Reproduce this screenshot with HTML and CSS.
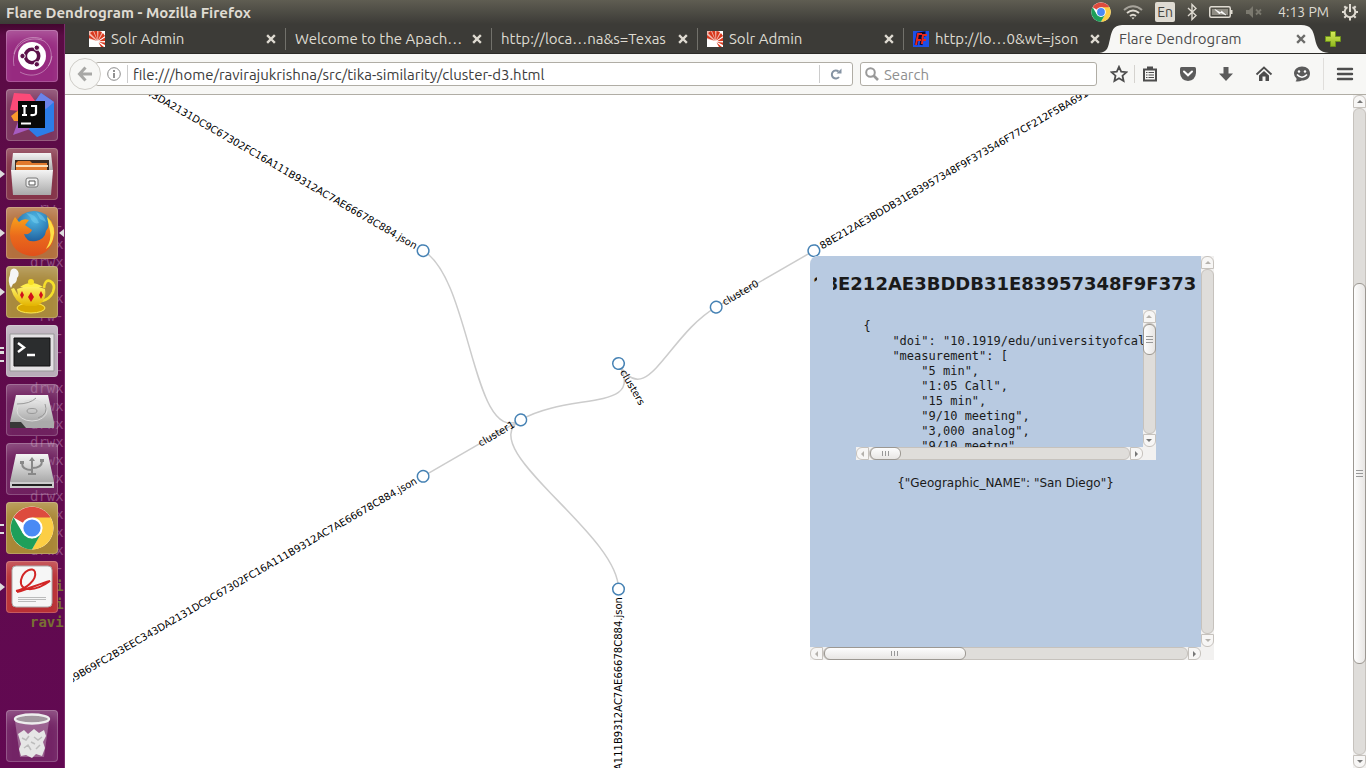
FILE: index.html
```html
<!DOCTYPE html>
<html lang="en">
<head>
<meta charset="utf-8">
<title>Flare Dendrogram</title>
<link rel="stylesheet" href="styles.css">
</head>
<body>
<svg class="defs" width="0" height="0" aria-hidden="true">
  <defs>
    <linearGradient id="g-metal" x1="0" y1="0" x2="0" y2="1"><stop offset="0" stop-color="#f4f4f4"/><stop offset="1" stop-color="#a9a9a9"/></linearGradient>
    <linearGradient id="g-fox" x1="0" y1="0" x2="0" y2="1"><stop offset="0" stop-color="#f9a51a"/><stop offset=".5" stop-color="#ea6a1c"/><stop offset="1" stop-color="#e0501b"/></linearGradient>
    <radialGradient id="g-globe" cx=".5" cy=".2" r=".8"><stop offset="0" stop-color="#4fb9e6"/><stop offset="1" stop-color="#0d3c80"/></radialGradient>
    <linearGradient id="g-pot" x1="0" y1="0" x2="0" y2="1"><stop offset="0" stop-color="#fff36b"/><stop offset="1" stop-color="#e3b400"/></linearGradient>
    <linearGradient id="g-plus" x1="0" y1="0" x2="0" y2="1"><stop offset="0" stop-color="#d8ec5a"/><stop offset="1" stop-color="#8fb81e"/></linearGradient>
    <symbol id="chrome" viewBox="0 0 44 44">
      <circle cx="22" cy="22" r="21.500" fill="#fff"/>
      <path d="M22 22 3.600 11.400A21.500 21.500 0 0 1 40.600 11.400Z" fill="#dd4b3e"/>
      <path d="M22 11.400H40.600A21.500 21.500 0 0 1 22 43.500L31 27Z" fill="#fcce44"/>
      <path d="M3.600 11.400 13 27.500 22 32.500 31 27.500 22 43.500A21.500 21.500 0 0 1 3.600 11.400Z" fill="#1e9f5a"/>
      <circle cx="22" cy="22" r="10.600" fill="#fff"/><circle cx="22" cy="22" r="8.600" fill="#4a8af4"/>
    </symbol>
    <symbol id="solr" viewBox="0 0 16 16">
      <path d="M0 0H16V16H0Z" fill="#fff"/>
      <path d="M1 2 4 0 8 9ZM5 0H8L8.500 9ZM9.500 0 13 1 9 9ZM14 2 16 5 9.500 9.500ZM16 6.500V10L10 10.200ZM16 11.500V14L10 11ZM15 16 12 16 9.500 11.500ZM0 4 7 9.500 0 7Z" fill="#d9381e"/>
      <path d="M0 0H11L16 5 10 9 8 10 0 8Z" fill="#d9381e" opacity=".35"/>
    </symbol>
    <symbol id="close" viewBox="0 0 10 10"><path d="M2 2 8 8M8 2 2 8" stroke="currentColor" stroke-width="2.400" stroke-linecap="square"/></symbol>
  </defs>
</svg>

<header class="menubar">
  <span class="window-title">Flare Dendrogram - Mozilla Firefox</span>
  <div class="indicators">
    <svg width="20" height="20"><use href="#chrome"/></svg>
    <svg width="20" height="16" viewBox="0 0 20 16" fill="none" stroke="#dfdbd2" stroke-width="2"><path d="M1 6Q10-1.500 19 6" stroke-opacity=".6"/><path d="M4 9Q10 4 16 9"/><path d="M7 12Q10 9.500 13 12"/><path d="M8.500 13.500H11.500L10 15.500Z" fill="#dfdbd2" stroke="none"/></svg>
    <span class="keyboard">En</span>
    <svg width="10" height="18" viewBox="0 0 10 18" fill="none" stroke="#dfdbd2" stroke-width="1.400"><path d="M1 5 9 12.500 5 16.500V1.500L9 5.500 1 13"/></svg>
    <svg width="24" height="14" viewBox="0 0 24 14"><rect x=".75" y="1.750" width="20.500" height="10.500" rx="1.500" fill="none" stroke="#dfdbd2" stroke-width="1.500"/><path d="M3 4H19V10H3Z" fill="#8f8c83"/><path d="M22 5H23.500V9H22Z" fill="#dfdbd2"/><path d="M6 4.500 12 8 12.500 6 17 10 11.500 7.500 10.500 9Z" fill="#fff" stroke="#fff" stroke-width=".6"/></svg>
    <svg width="18" height="14" viewBox="0 0 18 14"><path d="M1 5H4L8 1V13L4 9H1Z" fill="#7b796f"/><path d="M11 4.500 16 9.500M16 4.500 11 9.500" stroke="#7b796f" stroke-width="1.800"/></svg>
    <span class="clock">4:13 PM</span>
    <svg width="18" height="18" viewBox="0 0 18 18" fill="none" stroke="#dfdbd2" stroke-width="2"><path d="M6.500 4.200A5.300 5.300 0 1 0 11.500 4.200M9 1V9"/><path d="M1 9H4M14 9H17M3.300 3.300 5.300 5.300M14.700 3.300 12.700 5.300M3.300 14.700 5.300 12.700M14.700 14.700 12.700 12.700M9 14V17.500"/></svg>
  </div>
</header>

<div class="desktop">
  <nav class="launcher" aria-label="Launcher">
    <pre class="ghost" aria-hidden="true"> rw-
   -
drwx
drwx
   -
drwx
 rw-
   -
   -
   -
drwx
drwx
drwx
drwx
drwx
drwx
drwx
drwx
drwx
drwx
   -
<b>ravi
ravi
ravi</b></pre>
    <button class="tile dash" aria-label="Dash"><svg viewBox="0 0 52 52"><g fill="none" stroke="#fff" stroke-opacity=".35"><path d="M8 36C4 16 22 4 38 11C48 18 46 32 42 36M14 42C28 50 44 42 46 26M8 24C10 12 22 4 36 9"/></g><circle cx="26" cy="26" r="14" fill="#fff"/><circle cx="26" cy="26" r="6.700" fill="none" stroke="#5c1049" stroke-width="3.600"/><g fill="#5c1049" stroke="#fff" stroke-width="1"><circle cx="16.500" cy="26" r="2.700"/><circle cx="30.800" cy="17.700" r="2.700"/><circle cx="30.800" cy="34.300" r="2.700"/></g></svg></button>
    <button class="tile idea" aria-label="IntelliJ IDEA"><svg viewBox="0 0 52 52"><path d="M8 4 24 5 32 16 14 22 4 21Z" fill="#fb4a78"/><path d="M5 27 14 20 16 32 8 32Z" fill="#f99a2c"/><path d="M28 14 35 4 48 13V42L31 48 20 38Z" fill="#2c7de8"/><path d="M35 4 48 13 40 20 28 14Z" fill="#6c83ea"/><path d="M13 30 7 46 24 40Z" fill="#a65cc0"/><path d="M12 12H39V39H12Z" fill="#080808"/><path d="M16 17H21M18.500 17V26M16 26H21M25 17H30V24Q30 26.500 24.500 26M15 34.500H25" fill="none" stroke="#fff" stroke-width="2.200"/></svg></button>
    <button class="tile files running" aria-label="Files"><svg viewBox="0 0 52 52"><path d="M7 5H45L47 23H5Z" fill="url(#g-metal)"/><path d="M9 12H43V24H9Z" fill="#3b2b22"/><path d="M10 15 12 13H24L26 15H41V24H10Z" fill="#e17a2d"/><path d="M10 18H42" stroke="#fbe1bb" stroke-width="2"/><path d="M5 22H47L45 47H7Z" fill="url(#g-metal)"/><rect x="20" y="30" width="12" height="9" rx="2" fill="#eee" stroke="#777"/><path d="M23 33H29V37H23Z" fill="#fff" stroke="#555"/></svg></button>
    <button class="tile firefox running focused" aria-label="Firefox"><svg viewBox="0 0 52 52"><circle cx="28" cy="24" r="20" fill="url(#g-globe)"/><path d="M20 6Q30 7 33 16Q27 18 24 10ZM30 5Q38 8 40 15L34 12Z" fill="#77cff0" opacity=".5"/><path d="M9 10 13 15Q17 11 23 13L19 18 26 23Q24 28 18 27Q21 36 30 34Q39 32 40 24Q45 18 41 9Q51 18 48 31C45 44 36 49 26 49C12 48 4 39 4 27Q4 18 9 10Z" fill="url(#g-fox)"/><path d="M41 10Q51 20 47 32Q45 39 40 42Q46 32 44 24Z" fill="#fde047"/></svg></button>
    <button class="tile teapot running" aria-label="Teapot"><svg viewBox="0 0 52 52"><path d="M5 22Q1 15 4 9Q4 1 10 3Q15 7 11 12Q11 17 7 18Z" fill="#f5f5f5"/><path d="M38 22Q39 13 44 15Q50 18 47 26Q44 33 36 35" fill="none" stroke="#f5df2a" stroke-width="2.600"/><ellipse cx="25" cy="42" rx="14" ry="5" fill="#d9a900" stroke="#ffec50"/><path d="M11 23Q25 17 39 23Q41 36 30 40H20Q9 37 5 23L8 22 12 29Z" fill="url(#g-pot)"/><path d="M14 21Q25 13 37 21Z" fill="#fff04c"/><circle cx="25" cy="16" r="3" fill="#f8df24"/><g fill="#d1111a"><path d="M16 25 18 29 16 33 14 29ZM25 26 28 31 25 36 22 31ZM35 25 37 29 35 33 33 29Z"/></g></svg></button>
    <button class="tile terminal running triple" aria-label="Terminal"><svg viewBox="0 0 52 52"><path d="M4 9H48V46H4Z" fill="#e4e2e4" stroke="#999"/><path d="M8 13H44V41H8Z" fill="#2b2d2e" stroke="#111"/><path d="M12 18 18 22.500 12 27M21 30H29" fill="none" stroke="#fff" stroke-width="2.400"/></svg></button>
    <button class="tile drive" aria-label="Disk"><svg viewBox="0 0 52 52"><path d="M10 11H42L48 38H4Z" fill="url(#g-metal)"/><path d="M4 38H48V44H4Z" fill="#383838"/><path d="M15 38H48V44H20Z" fill="#aaa"/><g fill="none" stroke="#999"><ellipse cx="26" cy="26.500" rx="15" ry="10.500" stroke="#ddd"/><ellipse cx="26" cy="27" rx="5" ry="2.500"/><path d="M11 20Q24 20 30 14M32 34Q43 30 39 20"/></g></svg></button>
    <button class="tile drive" aria-label="USB drive"><svg viewBox="0 0 52 52"><path d="M10 11H42L48 39H4Z" fill="url(#g-metal)"/><path d="M4 39H48V45H4Z" fill="#ccc"/><path d="M6 42H46" stroke="#222" stroke-width="2"/><path d="M26 16V32M26 27Q16 27 16 20M26 25Q36 25 36 18M22 31H30" fill="none" stroke="#888" stroke-width="2"/><path d="M23 18 26 14 29 18Z" fill="#888"/><path d="M14 18H18V21H14ZM34 16H38V19H34Z" fill="#888"/></svg></button>
    <button class="tile chrome running double" aria-label="Chrome"><svg viewBox="0 0 52 52"><use href="#chrome" x="4" y="4" width="44" height="44"/></svg></button>
    <button class="tile reader running" aria-label="Document viewer"><svg viewBox="0 0 52 52"><rect x="6" y="5" width="40" height="41" rx="4" fill="#f6f6f6" stroke="#aaa"/><path d="M10 30C20 28 31 19 29 11C27 5 17 10 15 19C13 31 29 31 44 20C33 23 25 27 11 31" fill="none" stroke="#d22525" stroke-width="2"/><path d="M12 36.500H40M12 38.500H40M12 40.500H30" stroke="#bbb"/></svg></button>
    <button class="tile trash" aria-label="Trash"><svg viewBox="0 0 52 52"><path d="M9 11H43L38 47H14Z" fill="#fff" fill-opacity=".28"/><path d="M12 24 18 20 22 24 28 19 33 23 38 20 40 26 37 32 39 38 36 46 30 44 26 48 20 45 15 46 13 39 15 34Z" fill="#e6e6e6"/><path d="M16 28 20 30 23 26M28 27 32 30 36 27M18 38 22 35 25 40M30 39 34 35M25 32 29 34" fill="none" stroke="#bdbdbd" stroke-width="1.500"/><ellipse cx="26" cy="9" rx="17" ry="4.500" fill="#a398a0" stroke="#eee" stroke-width="2.400"/></svg></button>
  </nav>

  <main class="browser">
    <div class="tabs" role="tablist">
      <div class="tab"><svg class="favicon"><use href="#solr"/></svg><span class="tab-title">Solr Admin</span><button class="tab-close" aria-label="Close tab"><svg><use href="#close"/></svg></button></div>
      <div class="tab"><span class="tab-title">Welcome to the Apach…</span><button class="tab-close" aria-label="Close tab"><svg><use href="#close"/></svg></button></div>
      <div class="tab"><span class="tab-title">http://loca…na&amp;s=Texas</span><button class="tab-close" aria-label="Close tab"><svg><use href="#close"/></svg></button></div>
      <div class="tab"><svg class="favicon"><use href="#solr"/></svg><span class="tab-title">Solr Admin</span><button class="tab-close" aria-label="Close tab"><svg><use href="#close"/></svg></button></div>
      <div class="tab last"><svg class="favicon" viewBox="0 0 16 16"><path d="M0 0H16V16H0Z" fill="#1d50e8"/><path d="M3 14 5 3 11 2V4L7 5 6 8H9L8 14" fill="none" stroke="#0a0a30" stroke-width="3"/><path d="M3 14 5 3H9M4 9H8M9 13 10 4H14M10 9H13" fill="none" stroke="#e8281c" stroke-width="2"/></svg><span class="tab-title">http://lo…0&amp;wt=json</span><button class="tab-close" aria-label="Close tab"><svg><use href="#close"/></svg></button></div>
      <div class="tab active"><svg class="tab-shape" viewBox="0 0 230 28" preserveAspectRatio="none"><path d="M0 28C9 27 9 22 11 14C13 5 14 1 23 0H202C212 0 214 5 216 14C218 23 220 27 230 28Z" fill="#f7f7f5"/></svg><span class="tab-title">Flare Dendrogram</span><button class="tab-close" aria-label="Close tab"><svg><use href="#close"/></svg></button></div>
      <button class="new-tab" aria-label="New tab"><svg width="16" height="16" viewBox="0 0 16 16"><path d="M5.500.5H10.500V5.500H15.500V10.500H10.500V15.500H5.500V10.500H.5V5.500H5.500Z" fill="url(#g-plus)" stroke="#6f931a"/></svg></button>
    </div>

    <div class="toolbar">
      <button class="back" aria-label="Back"><svg width="16" height="16" viewBox="0 0 16 16" fill="none" stroke="#a8a8a6" stroke-width="3"><path d="M8.500 1.500 2.500 8 8.500 14.500M3 8H15"/></svg></button>
      <div class="urlbar">
        <svg class="info" width="14" height="14" viewBox="0 0 14 14"><circle cx="7" cy="7" r="6.300" fill="none" stroke="#8b8b8b"/><path d="M7 6V11M7 3V5" stroke="#777" stroke-width="1.600"/></svg>
        <input class="url" aria-label="Address" value="file:///home/ravirajukrishna/src/tika-similarity/cluster-d3.html">
        <button class="reload" aria-label="Reload"><svg width="12" height="12" viewBox="0 0 12 12"><path d="M9 9A4 4 0 1 1 8.500 3.500" fill="none" stroke="#8593a3" stroke-width="2"/><path d="M11.500.5V5.500H6.500Z" fill="#8593a3"/></svg></button>
      </div>
      <label class="search"><svg width="14" height="14" viewBox="0 0 14 14" fill="none" stroke="#999"><circle cx="5.500" cy="5.500" r="4.300" stroke-width="2"/><path d="M8.500 8.500 13 13" stroke-width="2.600"/></svg><input aria-label="Search" placeholder="Search"></label>
      <div class="actions">
        <button class="star" aria-label="Bookmark"><svg viewBox="0 0 18 18"><path d="M9 1.800 11.200 6.600 16.400 7.200 12.500 10.700 13.600 16 9 13.300 4.400 16 5.500 10.700 1.600 7.200 6.800 6.600Z" fill="none" stroke="#4d4d4d" stroke-width="1.800"/></svg></button>
        <button class="list" aria-label="Bookmarks list"><svg viewBox="0 0 18 18"><path d="M3 4.500H15V15.500H3Z" fill="#f7f7f5" stroke="#4d4d4d" stroke-width="2"/><path d="M6 1.500H12V5H6Z" fill="#4d4d4d"/><path d="M5 7.500H6.500M7.500 7.500H13M5 10H6.500M7.500 10H13M5 12.500H6.500M7.500 12.500H13" stroke="#4d4d4d" stroke-width="1.100"/></svg></button>
        <button class="tool" aria-label="Pocket"><svg viewBox="0 0 18 18"><path d="M2.500 2H15.500Q17 2 17 3.500V8Q16.500 15 9 16Q1.500 15 1 8V3.500Q1 2 2.500 2Z" fill="#5b5b5b"/><path d="M5 6.500 9 10.300 13 6.500" fill="none" stroke="#fff" stroke-width="2" stroke-linecap="round"/></svg></button>
        <button class="tool" aria-label="Downloads"><svg viewBox="0 0 18 18"><path d="M6.500 2H11.500V8.500H16L9 16 2 8.500H6.500Z" fill="#5b5b5b"/></svg></button>
        <button class="tool" aria-label="Home"><svg viewBox="0 0 18 18"><path d="M1.500 9.500 9 2.500 16.500 9.500" fill="none" stroke="#4d4d4d" stroke-width="1.800"/><path d="M4 10.500 9 6 14 10.500V16H10.500V11.500H7.500V16H4Z" fill="#4d4d4d"/></svg></button>
        <button class="tool" aria-label="Hello"><svg viewBox="0 0 18 18"><path d="M9 1.500C14 1.500 17 4.500 17 8.500C17 13 13.500 15.500 9 15.500Q6 16.800 2.500 16.200Q4 15 3.500 13.500Q1 11.500 1 8.500C1 4.500 4.500 1.500 9 1.500Z" fill="#5b5b5b"/><path d="M4 9.500Q9 15 14 9.500" fill="none" stroke="#fff" stroke-width="1.600"/><circle cx="6" cy="6.500" r="1.200" fill="#fff"/><circle cx="12" cy="6.500" r="1.200" fill="#fff"/></svg></button>
        <button class="menu" aria-label="Menu"><svg viewBox="0 0 18 18"><path d="M2 4H16M2 9H16M2 14H16" stroke="#4d4d4d" stroke-width="2.400" stroke-linecap="round"/></svg></button>
      </div>
    </div>

    <section class="page">
      <div class="canvas">
        <svg class="tree" aria-label="Cluster dendrogram">
          <g transform="translate(545.5 268.500)">
            <g class="link">
              <path d="M0 0C28.200 48.800 48.800-28.200 97.700-56.400"/>
              <path d="M0 0C28.200 48.800-48.800 28.200-97.700 56.400"/>
              <path d="M97.700-56.400 195.400-112.800"/>
              <path d="M-97.700 56.400C-146.500 84.600-146.500-84.600-195.400-112.800"/>
              <path d="M-97.700 56.400-195.400 112.800"/>
              <path d="M-97.700 56.400C-146.500 84.600 0 169.200 0 225.600"/>
            </g>
            <g class="node" transform="rotate(60)"><circle r="5.800"/><text x="8" dy=".31em">clusters</text></g>
            <g class="node" transform="rotate(-30) translate(112.800)"><circle r="5.800"/><text x="8" dy=".31em">cluster0</text></g>
            <g class="node" transform="rotate(-30) translate(225.600)"><circle r="5.800"/><text x="8" dy=".31em">88E212AE3BDDB31E83957348F9F373546F77CF212F5BA6917</text></g>
            <g class="node end" transform="rotate(-30) translate(-112.800)"><circle r="5.800"/><text x="-8" dy=".31em">cluster1</text></g>
            <g class="node end" transform="rotate(30) translate(-225.600)"><circle r="5.800"/><text x="-8" dy=".31em">343DA2131DC9C67302FC16A111B9312AC7AE66678C884.json</text></g>
            <g class="node end" transform="rotate(-30) translate(-225.600)"><circle r="5.800"/><text x="-8" dy=".31em">0F89B69FC2B3EEC343DA2131DC9C67302FC16A111B9312AC7AE66678C884.json</text></g>
            <g class="node end" transform="rotate(-90) translate(-225.600)"><circle r="5.800"/><text x="-8" dy=".31em">6A111B9312AC7AE66678C884.json</text></g>
          </g>
        </svg>

        <aside class="tooltip">
          <div class="tip-body">
            <h1>88E212AE3BDDB31E83957348F9F373</h1>
            <div class="code">
              <pre>{
    "doi": "10.1919/edu/universityofcali
    "measurement": [
        "5 min",
        "1:05 Call",
        "15 min",
        "9/10 meeting",
        "3,000 analog",
        "9/10 meetng"</pre>
              <div class="bar vertical"><button class="up at-end" aria-label="Scroll up"></button><div class="track"><i class="thumb code-v"></i></div><button class="down" aria-label="Scroll down"></button></div>
              <div class="bar horizontal"><button class="left at-end" aria-label="Scroll left"></button><div class="track"><i class="thumb code-h"></i></div><button class="right" aria-label="Scroll right"></button></div>
            </div>
            <p>{"Geographic_NAME": "San Diego"}</p>
          </div>
          <div class="bar vertical"><button class="up at-end" aria-label="Scroll up"></button><div class="track"></div><button class="down at-end" aria-label="Scroll down"></button></div>
          <div class="bar horizontal"><button class="left at-end" aria-label="Scroll left"></button><div class="track"><i class="thumb tip-h"></i></div><button class="right" aria-label="Scroll right"></button></div>
        </aside>
      </div>
      <div class="bar vertical"><button class="up" aria-label="Scroll up"></button><div class="track"><i class="thumb page-v"></i></div><button class="down" aria-label="Scroll down"></button></div>
    </section>
  </main>
</div>
</body>
</html>
```

FILE: styles.css
```css
* { box-sizing: border-box; }
body {
  margin: 0;
  height: 100vh;
  display: flex;
  flex-direction: column;
  overflow: hidden;
  background: #fff;
  font-family: Ubuntu, "Noto Sans", sans-serif;
  font-size: 15px;
}
button { padding: 0; border: 0; background: none; font: inherit; color: inherit; }
input { border: 0; padding: 0; background: none; font: inherit; color: inherit; min-width: 0; outline: 0; }
svg { display: block; flex: none; }
.defs { position: absolute; }

/* Top panel */
.menubar {
  flex: none;
  height: 24px;
  padding: 0 7px 0 6px;
  display: flex;
  align-items: center;
  justify-content: space-between;
  background: linear-gradient(#5f5d52, #3c3b37);
  color: #dfdbd2;
}
.window-title { font-weight: bold; }
.indicators { display: flex; align-items: center; gap: 12px; }
.keyboard {
  width: 20px;
  height: 20px;
  font-size: 14px;
  line-height: 20px;
  text-align: center;
  background: #dfdbd2;
  color: #45443e;
  border-radius: 2px;
}
.clock { margin-left: 3px; font-size: 14px; }

/* Launcher */
.desktop { flex: 1; min-height: 0; display: flex; }
.launcher {
  position: relative;
  flex: none;
  width: 65px;
  padding: 6px 0 6px 6px;
  display: flex;
  flex-direction: column;
  gap: 7px;
  background: linear-gradient(#43062f, #5b0b45 12px, #5d0b48 140px, #620952);
  border-right: 1px solid #7c2c6c;
  overflow: hidden;
}
.ghost {
  position: absolute;
  left: 30px;
  top: 175px;
  margin: 0;
  font: 14px/18px "DejaVu Sans Mono", monospace;
  color: #8f4c80;
}
.ghost b { color: #797033; }
.tile {
  position: relative;
  flex: none;
  width: 52px;
  height: 52px;
  border-radius: 4px;
  box-shadow: inset 0 0 0 1px rgba(255, 255, 255, .2), inset 0 12px 14px -6px rgba(255, 255, 255, .25);
}
.tile svg { width: 52px; height: 52px; }
.dash { background: #972a80; }
.idea { background: #7d365f; }
.files { background: #853449; }
.firefox { background: #b3703e; }
.teapot { background: #a98a3d; }
.terminal { background: #b9adb9; }
.drive { background: rgba(150, 90, 140, .3); }
.chrome { background: #a98736; }
.reader { background: #b93035; }
.trash { background: rgba(150, 90, 140, .35); margin-top: auto; }
.running::before {
  content: "";
  position: absolute;
  left: -6px;
  top: 22px;
  border: 4px solid transparent;
  border-left: 5px solid #ddd;
  border-right: 0;
}
.double::before, .triple::before {
  border: 0;
  width: 4px;
  height: 6px;
  border-top: 2px solid #ddd;
  border-bottom: 2px solid #ddd;
}
.triple::before { height: 11px; background: linear-gradient(transparent 2px, #ddd 2px, #ddd 5px, transparent 5px); }
.focused::after {
  content: "";
  position: absolute;
  right: -6px;
  top: 22px;
  border: 4px solid transparent;
  border-right: 5px solid #ddd;
  border-left: 0;
}

/* Tabs */
.browser { flex: 1; min-width: 0; display: flex; flex-direction: column; }
.tabs {
  flex: none;
  height: 30px;
  padding-left: 15px;
  display: flex;
  align-items: center;
  background: #3c3b37;
  border-bottom: 1px solid #2b2a27;
  color: #dfdbd2;
}
.tab {
  position: relative;
  flex: 0 1 206px;
  min-width: 0;
  height: 22px;
  padding: 0 8px 0 9px;
  display: flex;
  align-items: center;
  gap: 6px;
  border-right: 1px solid #72716b;
}
.tab.last, .tab.active { border-right-color: transparent; }
.tab.active { color: #4c4c4c; }
.tab-shape { position: absolute; left: -11px; top: -3px; width: 230px; height: 28px; }
.favicon { width: 16px; height: 16px; }
.tab-title { position: relative; flex: 1; min-width: 0; white-space: nowrap; }
.tab-close { position: relative; width: 12px; height: 12px; display: grid; place-items: center; }
.tab-close svg { width: 10px; height: 10px; }
.tab.active .tab-close { color: #6b6b69; }
.new-tab { position: relative; margin-left: 9px; }

/* Navigation toolbar */
.toolbar {
  flex: none;
  height: 41px;
  padding-left: 4px;
  display: flex;
  align-items: center;
  background: #f7f7f5;
  border-bottom: 1px solid #b0ada5;
  color: #3c3c3c;
}
.back {
  position: relative;
  flex: none;
  width: 32px;
  height: 32px;
  border: 1px solid #cfcdc8;
  border-radius: 50%;
  background: #f7f7f5;
  display: grid;
  place-items: center;
}
.urlbar, .search {
  height: 24px;
  display: flex;
  align-items: center;
  border: 1px solid #b0ada5;
  border-radius: 3px;
  background: #fff;
}
.urlbar { flex: 1; min-width: 0; margin-left: -6px; padding-left: 11px; }
.url { flex: 1; height: 18px; margin-left: 6px; padding-left: 5px; border-left: 1px solid #ccc; }
.reload { width: 33px; height: 18px; border-left: 1px solid #ccc; display: grid; place-items: center; }
.search { flex: 0 1 237px; min-width: 0; margin-left: 7px; padding-left: 4px; gap: 5px; }
.search input { flex: 1; }
.search input::placeholder { color: #8f8f8f; opacity: 1; }
.actions { flex: none; display: flex; align-items: center; padding-left: 6px; }
.actions button { height: 18px; display: grid; place-items: center; }
.actions svg { width: 18px; height: 18px; }
.star { width: 32px; border-right: 1px solid #d5d3cf; }
.list { width: 30px; margin-right: 4px; }
.tool { width: 38px; }
.actions .menu { width: 43px; height: 32px; margin-left: 2px; border-left: 1px solid #e0dedb; }

/* Page */
.page { flex: 1; min-height: 0; display: flex; }
.canvas { position: relative; flex: 1; min-width: 0; padding-left: 8px; overflow: hidden; }
.tree { width: 100%; height: 100%; overflow: hidden; }
.link path { fill: none; stroke: #ccc; stroke-width: 1.5px; }
.node circle { fill: #fff; stroke: steelblue; stroke-width: 1.5px; }
.node text { font: 10px "DejaVu Sans", sans-serif; }
.end text { text-anchor: end; }

.tooltip {
  position: absolute;
  left: 745px;
  top: 161px;
  width: 404px;
  height: 404px;
  display: grid;
  grid-template: 1fr 13px / 1fr 13px;
  background: #f2f1f0;
  border-radius: 8px 0 0 0;
  color: #1a1a1a;
  font: 12px/15px "DejaVu Sans", sans-serif;
}
.tip-body {
  min-width: 0;
  padding-top: 17px;
  overflow: hidden;
  display: flex;
  flex-direction: column;
  align-items: center;
  background: #b8cae1;
  border-radius: 8px 0 0 0;
}
.tip-body h1 {
  align-self: stretch;
  margin: 0 0 15px;
  padding-left: 3px;
  font-size: 18px;
  line-height: 22px;
  white-space: nowrap;
  clip-path: polygon(0 0, 7px 0, 7px 7px, 3px 10px, 0 10px, 0 22px, 23px 22px, 23px 0, 100% 0, 100% 22px, 0 22px);
}
.code { width: 300px; height: 150px; display: grid; grid-template: 1fr 13px / 1fr 13px; background: #f2f1f0; }
.code pre {
  min-width: 0;
  min-height: 0;
  margin: 0;
  padding: 9px 0 0 8px;
  overflow: hidden;
  background: #b8cae1;
  font: 12px/15px "DejaVu Sans Mono", monospace;
}
.tip-body p { margin: 16px 0; }

/* Scrollbars */
.bar { display: flex; min-width: 0; min-height: 0; background: #f2f1f0; color: #777; }
.vertical { width: 13px; flex-direction: column; }
.horizontal { height: 13px; }
.bar button { flex: none; width: 13px; height: 13px; display: grid; place-items: center; background: #f7f6f5; border: 1px solid #c6c2bd; }
.bar button::before { content: ""; border: 3px solid transparent; }
.bar .at-end { color: #b5b2ad; }
.up { border-radius: 6px 6px 0 0; }
.down { border-radius: 0 0 6px 6px; }
.left { border-radius: 6px 0 0 6px; }
.right { border-radius: 0 6px 6px 0; }
.bar .up::before { border-bottom-color: currentColor; border-top: 0; }
.bar .down::before { border-top-color: currentColor; border-bottom: 0; }
.bar .left::before { border-right-color: currentColor; border-left: 0; }
.bar .right::before { border-left-color: currentColor; border-right: 0; }
.track { position: relative; flex: 1; background: #dfddda; border: 1px solid #c6c2bd; border-radius: 6px; }
.thumb {
  position: absolute;
  display: grid;
  place-items: center;
  background: linear-gradient(90deg, #fdfdfd, #e8e6e4);
  border: 1px solid #9c9892;
  border-radius: 6px;
}
.thumb::before { content: ""; width: 7px; height: 7px; }
.vertical .thumb { left: -1px; right: -1px; }
.vertical .thumb::before { background: repeating-linear-gradient(#999 0 1px, transparent 1px 3px); }
.horizontal .thumb { top: -1px; bottom: -1px; background: linear-gradient(#fdfdfd, #e8e6e4); }
.horizontal .thumb::before { height: 5px; background: repeating-linear-gradient(90deg, #999 0 1px, transparent 1px 3px); }
.page-v { top: 27%; height: 59%; }
.code-v { top: 0; height: 28%; }
.code-h { left: 0; width: 12%; }
.tip-h { left: 0; width: 39%; }
```
